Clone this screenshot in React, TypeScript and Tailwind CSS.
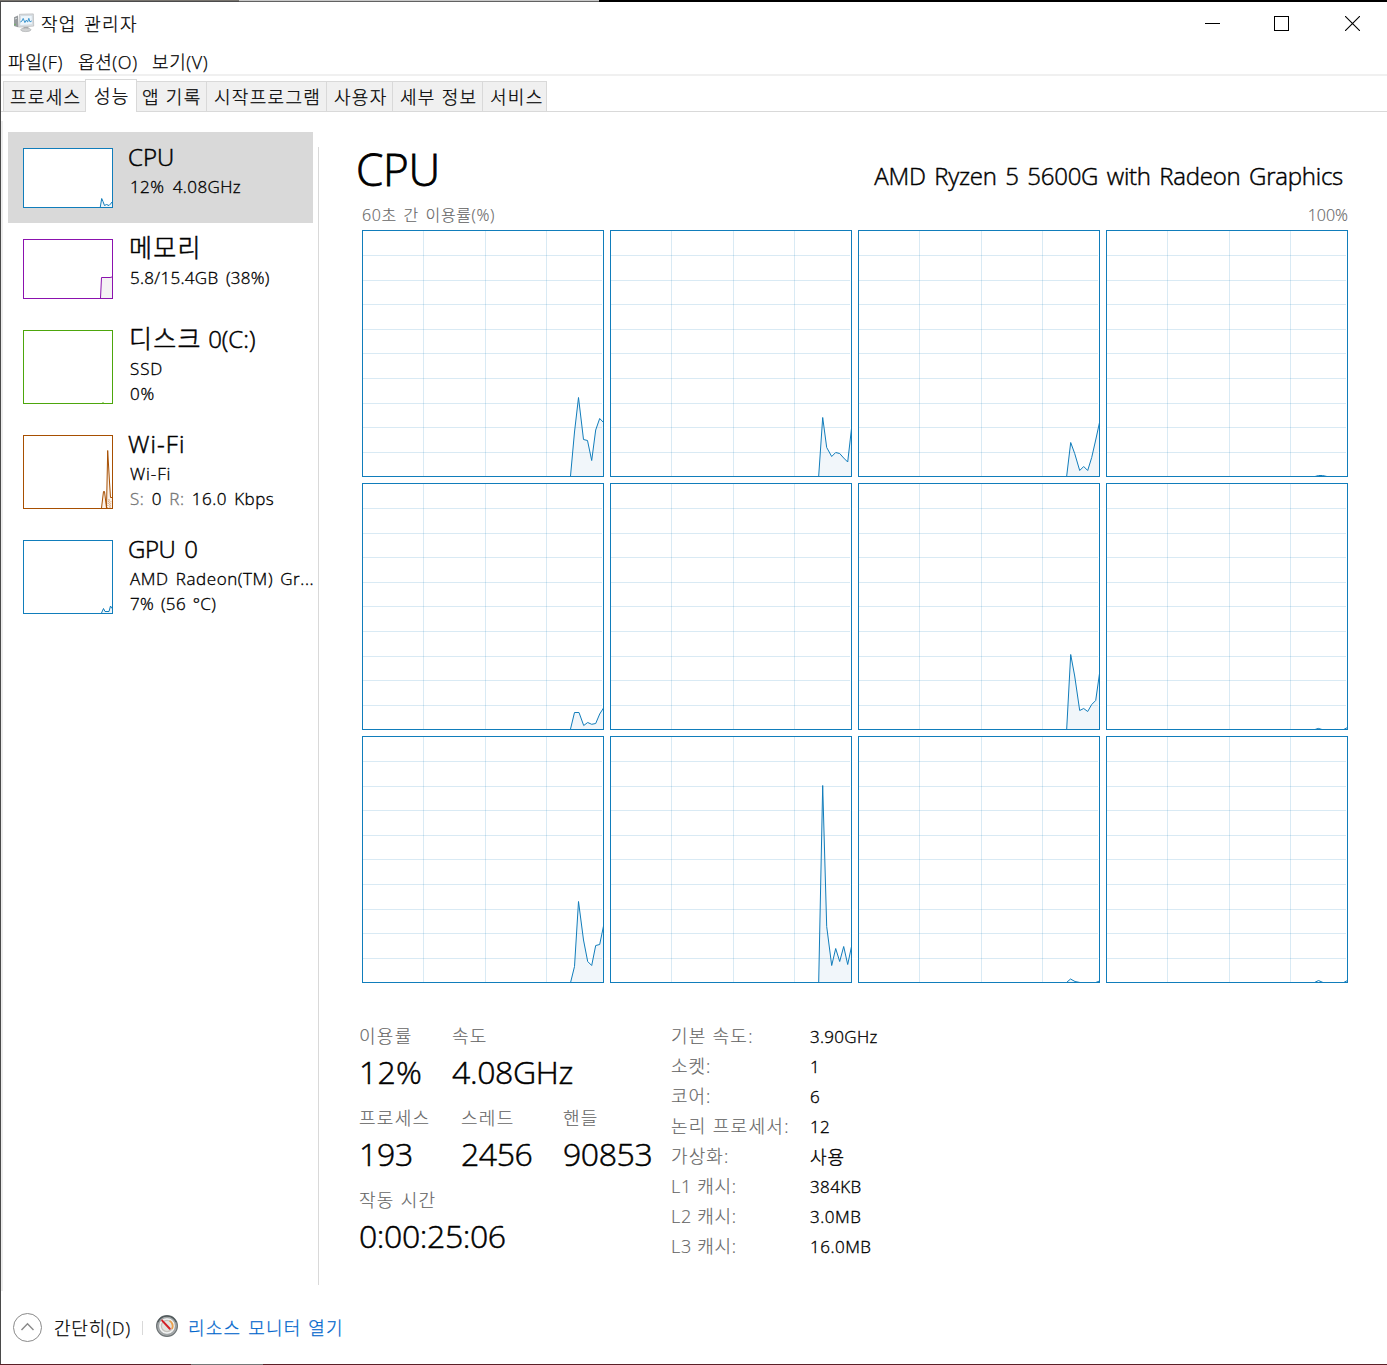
import React from "react";

type Point = [number, number];

const tabs = [
  { label: "프로세스", width: "w-[82px]", pad: "pl-[6px]" },
  { label: "성능", width: "w-[52px]", pad: "pl-[8px]", active: true },
  { label: "앱 기록", width: "w-[70px]", pad: "pl-[5px]" },
  { label: "시작프로그램", width: "w-[120px]", pad: "pl-[7px]" },
  { label: "사용자", width: "w-[66px]", pad: "pl-[7px]" },
  { label: "세부 정보", width: "w-[90px]", pad: "pl-[7px]" },
  { label: "서비스", width: "w-[64px]", pad: "pl-[7px]" },
];

const cores: Point[][] = [
  [[208.5, 246], [212.5, 202], [216.5, 167.5], [221.5, 209.5], [225.5, 210.5], [229.7, 230.5], [233.7, 200], [237.7, 188.5], [241.5, 192.5]],
  [[208.7, 246], [212.7, 187.5], [216.7, 217.5], [221.7, 226.5], [225.7, 222.5], [229.7, 223.5], [233.7, 228], [237.7, 232], [241.5, 198.5]],
  [[208.7, 246], [212.7, 212.5], [216.7, 223.5], [221.7, 240.5], [225.7, 236.5], [229.7, 240.5], [233.7, 227.5], [237.7, 210], [241.5, 192.5]],
  [[209, 246.5], [212.5, 245.5], [216.5, 245.5], [221, 246.5]],
  [[208.5, 246], [212.5, 229.5], [217, 229.5], [221.7, 242.5], [225.7, 239.5], [229.7, 241.3], [233.7, 240.5], [237.7, 231], [241.5, 225]],
  [],
  [[208.7, 246], [212.7, 171.5], [216.7, 193], [221.7, 227.5], [225.7, 225.5], [229.7, 228.5], [233.7, 221.5], [237.7, 217.5], [241.5, 190.5]],
  [[209, 246.5], [212.3, 245.4], [216, 246.5], [237.7, 246.5], [241.5, 244.5]],
  [[208.7, 246], [212.5, 230.5], [216.5, 165.5], [221.5, 204], [225.7, 225.5], [229.7, 229.5], [233.7, 209.5], [237.7, 208.5], [241.5, 190]],
  [[208.7, 246], [212.7, 49.5], [216.7, 190.5], [221.7, 229.5], [225.7, 212.5], [229.7, 225.5], [233.7, 210.5], [237.7, 228.5], [241.5, 210.5]],
  [[208.5, 246.5], [212.5, 243], [217, 245.5], [222, 246.5], [237.7, 246.5], [241.5, 245]],
  [[208.5, 246.5], [212.5, 244.5], [217, 246.5], [237.7, 246.5], [241.5, 244.5]],
];

const line = (p: Point[]) => p.map(([x, y]) => `${x},${y}`).join(" ");
const area = (p: Point[], bottom: number) =>
  p.length ? `${p[0][0]},${bottom} ${line(p)} ${p[p.length - 1][0]},${bottom}` : "";

const gridX = [61, 123, 184];
const gridY = [25, 50, 74, 99, 123, 148, 173, 197, 222];

function CoreGraph({ points }: { points: Point[] }) {
  return (
    <svg width="242" height="247" viewBox="0 0 242 247" className="block bg-white">
      <polygon points={area(points, 246)} fill="#f1f6fa" />
      <g fill="#117dbb" fillOpacity="0.16" shapeRendering="crispEdges">
        {gridX.map((x) => <rect key={x} x={x} y="1" width="1" height="245" />)}
        {gridY.map((y) => <rect key={y} x="1" y={y} width="239" height="1" />)}
      </g>
      <polyline points={line(points)} fill="none" stroke="#117dbb" strokeWidth="1" />
      <rect x="0.5" y="0.5" width="241" height="246" fill="none" stroke="#117dbb" />
    </svg>
  );
}

function Thumb({ height, color, fill, points, children }: { height: number; color: string; fill: string; points: Point[]; children?: React.ReactNode }) {
  return (
    <svg width="90" height={height} viewBox={`0 0 90 ${height}`} className="mt-4 block shrink-0 bg-white">
      <polygon points={area(points, height - 1)} fill={fill} />
      <polyline points={line(points)} fill="none" stroke={color} strokeWidth="1" />
      {children}
      <rect x="0.5" y="0.5" width="89" height={height - 1} fill="none" stroke={color} />
    </svg>
  );
}

const title = "block h-[30px] whitespace-nowrap text-[24px] [-webkit-text-stroke:0.5px]";
const sub = "block h-[25px] whitespace-nowrap pl-[2px] text-[17px] leading-[25px] [-webkit-text-stroke:0.35px]";

function SideItem({ thumb, height, active, children }: { thumb: React.ReactNode; height: string; active?: boolean; children: React.ReactNode }) {
  return (
    <div className={`flex w-[305px] pl-[15px] ${height} ${active ? "bg-[#d9d9d9]" : ""}`}>
      {thumb}
      <div className="ml-[15px] flex flex-col pt-[10px]">{children}</div>
    </div>
  );
}

function Stat({ label, value, className = "", valueClass = "" }: { label: string; value: string; className?: string; valueClass?: string }) {
  return (
    <div className={className}>
      <div className="h-6 whitespace-nowrap text-[18px] leading-[26px] tracking-[1.3px] text-[#666] [-webkit-text-stroke:0.15px]">{label}</div>
      <div className={`mt-[5px] h-10 whitespace-nowrap text-[32px] leading-10 [-webkit-text-stroke:0.5px] ${valueClass}`}>{value}</div>
    </div>
  );
}

const details: [string, string, string, string][] = [
  ["기본 속도:", "3.90GHz", "tracking-[1.25px]", "text-[17px] tracking-[0.3px]"],
  ["소켓:", "1", "tracking-[1px]", "text-[17px]"],
  ["코어:", "6", "tracking-[1px]", "text-[17px]"],
  ["논리 프로세서:", "12", "tracking-[1.3px]", "text-[17px] tracking-[0.3px]"],
  ["가상화:", "사용", "tracking-[1.1px]", "text-[18px] tracking-[1px]"],
  ["L1 캐시:", "384KB", "tracking-[0.7px]", "text-[17px] tracking-[0.4px]"],
  ["L2 캐시:", "3.0MB", "tracking-[0.7px]", "text-[17px] tracking-[0.5px]"],
  ["L3 캐시:", "16.0MB", "tracking-[0.7px]", "text-[17px] tracking-[0.5px]"],
];

function AppIcon() {
  return (
    <svg width="22" height="20" viewBox="0 0 22 20" className="block">
      <path d="M1 4.2 5 2.6v11.6l-4-1.2z" fill="#979b9e" />
      <path d="M1.8 5.4 4 4.7v1.1l-2.2.6z" fill="#d8dcde" />
      <path d="M1.3 10.7h1.4v1.5H1.3z" fill="#6bb561" />
      <path d="m6.5 1.3 13.8-.4.4 12.2-15.2 1z" fill="#dfe1e2" stroke="#b2b5b7" strokeWidth="0.7" />
      <path d="m7.6 2.7 11.5-.3.2 9.2-12.4.9z" fill="#eef6fc" stroke="#c2ced8" strokeWidth="0.5" />
      <path d="m7.3 9 1.7-1 1.2-2.6 1.7 4.2 1.5-2.6 1.2 2.1 1.2-3.8 1.2 3.6 1.8-1" fill="none" stroke="#3f97cf" strokeWidth="1" />
      <path d="M10.5 14h5v2h-5z" fill="#a8abad" />
      <ellipse cx="12.8" cy="16.8" rx="5.2" ry="1.8" fill="#cfd1d2" stroke="#a4a7a9" strokeWidth="0.6" />
    </svg>
  );
}

function GaugeIcon() {
  return (
    <svg width="24" height="24" viewBox="0 0 24 24" className="block">
      <circle cx="12" cy="12" r="10.4" fill="#a9adae" stroke="#6d7375" strokeWidth="1.2" />
      <path d="M2.8 8.2A10 10 0 0 1 21.2 8.2" fill="none" stroke="#4f585a" strokeWidth="1.2" />
      <circle cx="12" cy="12" r="8.4" fill="#f0f1f1" stroke="#8a8f91" strokeWidth="0.8" />
      <circle cx="12" cy="12" r="5.6" fill="#e3e3e0" stroke="#c3c2bd" strokeWidth="1.3" />
      <path d="M14.5 6.8a5.8 5.8 0 0 1 2.4 8.2" fill="none" stroke="#eda04c" strokeWidth="1.8" />
      <path d="m7.2 6.6 7.6 8.2" stroke="#d32026" strokeWidth="2" strokeLinecap="round" />
    </svg>
  );
}

export default function App() {
  return (
    <div className="flex h-[1365px] w-[1387px] flex-col overflow-hidden bg-white font-['Open_Sans','Noto_Sans_CJK_KR',sans-serif] font-light text-black">
      <div className="flex h-[2px] shrink-0">
        <div className="w-[239px] border-b border-[#4b4b4b] bg-[#77736d]" />
        <div className="w-[360px] border-b border-[#626262] bg-[#c8c8c8]" />
        <div className="flex-1 bg-black" />
      </div>

      <div className="flex min-h-0 flex-1 flex-col border-l border-[#4a4a4a]">
        <header className="flex h-[42px] shrink-0 items-center pl-3">
          <AppIcon />
          <h1 className="ml-[6px] text-[18px] leading-[42px] tracking-[1.3px] [-webkit-text-stroke:0.25px] [word-spacing:1.5px] pt-[2px]">작업 관리자</h1>
          <svg width="15" height="15" viewBox="0 0 15 15" className="ml-auto block">
            <path d="M0 7.5h15" stroke="#000" />
          </svg>
          <svg width="15" height="15" viewBox="0 0 15 15" className="ml-[54px] block">
            <rect x="0.5" y="0.5" width="14" height="14" fill="none" stroke="#000" />
          </svg>
          <svg width="15" height="15" viewBox="0 0 15 15" className="ml-[56px] mr-[27px] block">
            <path d="m0 0 15 15M15 0 0 15" stroke="#000" strokeWidth="1.1" />
          </svg>
        </header>

        <nav className="flex h-[30px] shrink-0 pl-[7px] text-[18px] leading-[36px] tracking-[0.6px] [-webkit-text-stroke:0.25px]">
          <span className="w-[70px]">파일(F)</span>
          <span className="w-[74px]">옵션(O)</span>
          <span>보기(V)</span>
        </nav>
        <div className="h-[2px] shrink-0 bg-[#f0f0f0]" />

        <div className="flex h-9 shrink-0 items-end">
          <div className="w-[2px] self-stretch border-b border-[#d9d9d9]" />
          {tabs.map((t, i) =>
            t.active ? (
              <div key={t.label} className={`${t.width} ${t.pad} h-[33px] border-x border-t border-[#d9d9d9] bg-white text-[18px] leading-[33px] tracking-[1.3px] [-webkit-text-stroke:0.25px]`}>
                {t.label}
              </div>
            ) : (
              <div key={t.label} className={`${t.width} ${t.pad} h-[31px] whitespace-nowrap border-y border-[#d9d9d9] bg-[#f0f0f0] text-[18px] leading-[31px] tracking-[1.3px] [-webkit-text-stroke:0.25px] ${i === 0 ? "border-l" : "border-r"}`}>
                {t.label}
              </div>
            ),
          )}
          <div className="flex-1 self-stretch border-b border-[#d9d9d9]" />
        </div>

        <main className="flex min-h-0 flex-1">
          <aside className="mt-[9px] w-[317px] border-l-2 border-[#ededed] pl-[5px] pt-[11px]">
            <SideItem
              active
              height="h-[91px]"
              thumb={<Thumb height={60} color="#117dbb" fill="#f1f6fa" points={[[77.3, 59], [78.7, 50.5], [80, 53.5], [81.5, 57.5], [83.5, 56.5], [86, 57.5], [87.5, 56], [89, 54]]} />}
            >
              <span className={`${title} leading-[30px]`}>CPU</span>
              <span className={`${sub} mt-[2px] tracking-[0.4px] [word-spacing:3.6px]`}>12% 4.08GHz</span>
            </SideItem>
            <SideItem
              height="h-[91px]"
              thumb={<Thumb height={60} color="#8b12ae" fill="#f4f2f4" points={[[77.5, 59], [78.5, 38.5], [87, 38.5], [89, 38]]} />}
            >
              <span className={`${title} pl-[1px] text-[25px] leading-[28px] tracking-[1.3px]`}>메모리</span>
              <span className={`${sub} mt-[2px] tracking-[0.3px] [word-spacing:2.8px]`}>5.8/15.4GB (38%)</span>
            </SideItem>
            <SideItem
              height="h-[105px]"
              thumb={<Thumb height={74} color="#4da60c" fill="#eff7e9" points={[[79, 73.5], [80, 72.6], [81, 73.5]]} />}
            >
              <span className={`${title} pl-[1px] leading-[28px]`}><span className="text-[25px] tracking-[1.3px]">디스크</span> 0(C:)</span>
              <span className={`${sub} mt-[2px] tracking-[0.9px]`}>SSD</span>
              <span className={`${sub} tracking-[0.9px]`}>0%</span>
            </SideItem>
            <SideItem
              height="h-[105px]"
              thumb={
                <Thumb height={74} color="#a74f01" fill="#fcf3eb" points={[[78.5, 73], [80.5, 56.5], [81.5, 56.5], [83.5, 73], [84.7, 15.5], [86.5, 47], [87.5, 62.5], [89, 62.5]]}>
                  <path d="m84.5 73 1.5-9 1 9 1-7" fill="none" stroke="#a74f01" strokeDasharray="1 1" strokeWidth="0.5" />
                </Thumb>
              }
            >
              <span className={`${title} leading-[30px] tracking-[1.1px]`}>Wi-Fi</span>
              <span className={`${sub} mt-[2px] tracking-[0.9px]`}>Wi-Fi</span>
              <span className={`${sub} tracking-[0.45px] [word-spacing:2.6px]`}>
                <span className="text-[#777]">S:</span> 0 <span className="text-[#777]">R:</span> 16.0 Kbps
              </span>
            </SideItem>
            <SideItem
              height="h-[105px]"
              thumb={<Thumb height={74} color="#117dbb" fill="#f1f6fa" points={[[78.5, 73], [80.5, 68.5], [82, 71.5], [86, 71.5], [87.5, 66], [89, 68.5]]} />}
            >
              <span className={`${title} leading-[30px] tracking-[-0.4px] [word-spacing:3px]`}>GPU 0</span>
              <span className={`${sub} mt-[2px] tracking-[0.6px] [word-spacing:2px]`}>AMD Radeon(TM) Gr...</span>
              <span className={`${sub} tracking-[0.35px] [word-spacing:2px]`}>7% (56 °C)</span>
            </SideItem>
          </aside>

          <div className="mb-[6px] mt-[35px] w-px bg-[#d9d9d9]" />

          <section className="ml-[37px] w-[1000px] pt-[29px]">
            <div className="flex h-[56px] justify-between pr-[13px]">
              <h2 className="text-[44px] leading-[56px] tracking-[-0.3px] [-webkit-text-stroke:0.8px]">CPU</h2>
              <span className="text-[24px] leading-[70px] tracking-[-0.25px] [-webkit-text-stroke:0.45px] [word-spacing:2.6px]">AMD Ryzen 5 5600G with Radeon Graphics</span>
            </div>
            <div className="mt-[8px] flex h-5 justify-between pl-[6px] pr-[8px] text-[16px] leading-5 text-[#666] [-webkit-text-stroke:0.15px]">
              <span className="tracking-[0.6px] [word-spacing:2px]">60초 간 이용률(%)</span>
              <span>100%</span>
            </div>
            <div className="ml-[6px] mt-[5px] grid w-[986px] grid-cols-4 gap-[6px]">
              {cores.map((p, i) => <CoreGraph key={i} points={p} />)}
            </div>

            <div className="mt-10 flex pl-[3px]">
              <div className="w-[312px]">
                <div className="flex h-[82px]">
                  <Stat className="w-[93px]" label="이용률" value="12%" valueClass="tracking-[0.2px]" />
                  <Stat label="속도" value="4.08GHz" valueClass="tracking-[-0.35px]" />
                </div>
                <div className="flex h-[82px]">
                  <Stat className="w-[102px]" label="프로세스" value="193" valueClass="tracking-[-0.3px]" />
                  <Stat className="w-[102px]" label="스레드" value="2456" valueClass="tracking-[-0.4px]" />
                  <Stat label="핸들" value="90853" valueClass="tracking-[-0.4px]" />
                </div>
                <Stat label="작동 시간" value="0:00:25:06" valueClass="tracking-[-0.4px]" />
              </div>
              <dl className="-mt-[2px] grid h-[240px] auto-rows-[30px] grid-cols-[139px_auto] leading-[30px]">
                {details.map(([k, v, tracking, valueClass]) => (
                  <React.Fragment key={k}>
                    <dt className={`text-[18px] text-[#666] [-webkit-text-stroke:0.15px] ${tracking}`}>{k}</dt>
                    <dd className={`leading-[32px] [-webkit-text-stroke:0.35px] ${valueClass}`}>{v}</dd>
                  </React.Fragment>
                ))}
              </dl>
            </div>
          </section>
        </main>

        <footer className="flex h-[73px] shrink-0 items-center pl-3 text-[18px] leading-[30px]">
          <svg width="30" height="30" viewBox="0 0 30 30" className="block">
            <circle cx="14.5" cy="14.5" r="14" fill="none" stroke="#8a8a8a" strokeWidth="1" />
            <path d="m8.5 17 6-6.3 6 6.3" fill="none" stroke="#8a8a8a" strokeWidth="1.4" />
          </svg>
          <span className="ml-[11px] tracking-[0.8px] [-webkit-text-stroke:0.25px]">간단히(D)</span>
          <div className="ml-[11px] h-[14px] w-px bg-[#d9d9d9]" />
          <div className="-mt-1 ml-3"><GaugeIcon /></div>
          <span className="ml-[9px] tracking-[1.25px] text-[#0066cc] [-webkit-text-stroke:0.25px] [word-spacing:0.8px]">리소스 모니터 열기</span>
        </footer>
      </div>
      <div className="flex h-px shrink-0 bg-[#5a2027]">
        <div className="ml-[191px] w-[72px] bg-[#777]" />
      </div>
    </div>
  );
}
